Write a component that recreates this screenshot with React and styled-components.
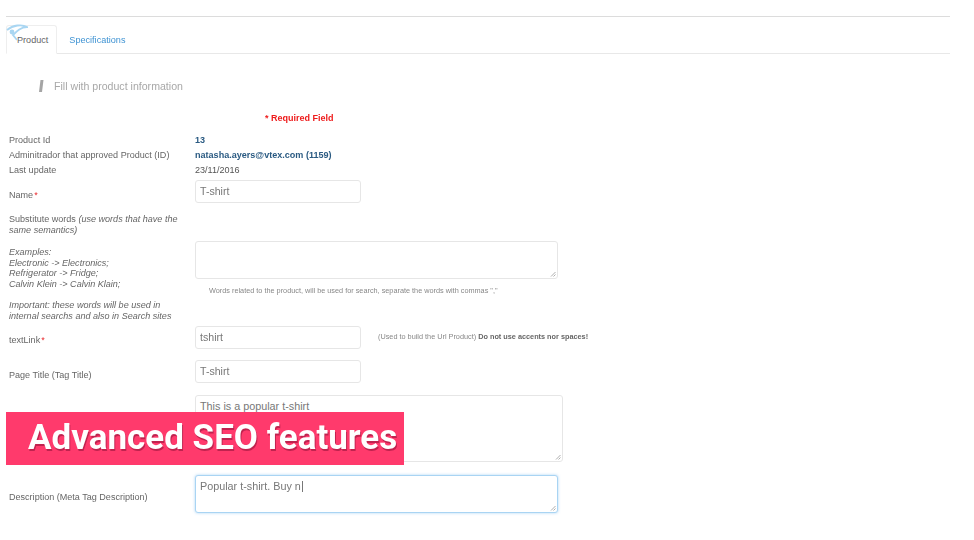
import React from 'react';
import styled, { createGlobalStyle } from 'styled-components';

const GlobalStyle = createGlobalStyle`
  html, body {
    margin: 0;
    padding: 0;
    background: #fff;
  }
`;

const Page = styled.div`
  position: relative;
  width: 974px;
  height: 540px;
  overflow: hidden;
  box-sizing: border-box;
  padding: 16px 24px 0 6px;
  font-family: 'Liberation Sans', Arial, sans-serif;
  color: #555;
`;
const Blurred = styled.div`
  filter: blur(0.6px);
`;
const TopRule = styled.div`
  height: 1px;
  background: #dcdcdc;
`;
const Tabs = styled.div`
  display: flex;
  height: 28px;
  margin-top: 8px;
  border-bottom: 1px solid #e8e8e8;
`;
const Tab = styled.div`
  position: relative;
  box-sizing: border-box;
  height: ${(p) => (p.$active ? 29 : 28)}px;
  display: flex;
  align-items: center;
  font-size: 9.1px;
  padding: ${(p) => (p.$active ? '0 8px 0 10px' : '0 11px')};
  color: ${(p) => (p.$active ? '#666' : '#3f93d3')};
  background: ${(p) => (p.$active ? '#fff' : 'transparent')};
  border: 1px solid ${(p) => (p.$active ? '#eeeeee' : 'transparent')};
  border-bottom: ${(p) => (p.$active ? '1px solid #fff' : 'none')};
  border-radius: 3px 3px 0 0;
`;
const Swoosh = styled.svg`
  position: absolute;
  left: -1px;
  top: -2px;
  width: 22px;
  height: 22px;
`;
const Heading = styled.div`
  display: flex;
  align-items: center;
  gap: 10px;
  margin: 25px 0 0 33px;
  height: 14px;
  font-size: 10.6px;
  color: #a8a8a8;
`;
const Required = styled.div`
  margin: 19px 0 0 259px;
  height: 12px;
  line-height: 12px;
  font-size: 9px;
  font-weight: bold;
  color: #ee1c1c;
`;
const Form = styled.div`
  margin: 9px 0 0 3px;
`;
const Row = styled.div`
  display: grid;
  grid-template-columns: 186px 1fr;
  align-items: ${(p) => (p.$top ? 'start' : 'center')};
  min-height: ${(p) => p.$h || 15}px;
  margin-top: ${(p) => p.$gap || 0}px;
  font-size: 9.05px;
  line-height: 10.5px;
`;
const Label = styled.div`
  color: #666;
  padding-top: ${(p) => p.$drop || 0}px;
`;
const Note = styled.div`
  width: 172px;
  color: #666;
  margin-bottom: ${(p) => p.$mb || 0}px;
`;
const Star = styled.span`
  color: #e8262a;
  margin-left: 1px;
`;
const Value = styled.div`
  color: ${(p) => (p.$link ? '#2a5a82' : '#555')};
  font-weight: ${(p) => (p.$link ? 'bold' : 'normal')};
`;
const FieldLine = styled.div`
  display: flex;
  align-items: center;
`;
const Input = styled.div`
  box-sizing: border-box;
  width: 166px;
  height: 23px;
  line-height: 20px;
  padding: 0 4px;
  font-size: 10.6px;
  color: #777;
  background: #fff;
  border: 1px solid #e6e6e6;
  border-radius: 3px;
`;
const Area = styled.div`
  position: relative;
  box-sizing: border-box;
  width: ${(p) => p.$w || 363}px;
  height: ${(p) => p.$h}px;
  margin-top: ${(p) => p.$mt || 0}px;
  padding: 4px;
  font-size: 10.8px;
  line-height: 12px;
  color: #777;
  background: #fff;
  border: 1px solid ${(p) => (p.$focus ? '#a9d4f3' : '#e6e6e6')};
  border-radius: 3px;
  box-shadow: ${(p) => (p.$focus ? '0 0 3px rgba(102, 175, 233, 0.55)' : 'none')};
`;
const Grip = styled.svg`
  position: absolute;
  right: 1px;
  bottom: 1px;
  width: 6px;
  height: 6px;
`;
const Caret = styled.span`
  display: inline-block;
  width: 1px;
  height: 11px;
  margin-left: 1px;
  vertical-align: -2px;
  background: #777;
`;
const Help = styled.div`
  margin: 7px 0 0 14px;
  font-size: 7.3px;
  line-height: 9px;
  color: #888;
`;
const Hint = styled.div`
  margin-left: 17px;
  font-size: 7.3px;
  color: #888;
  b {
    color: #666;
  }
`;
const Banner = styled.div`
  position: absolute;
  left: 6px;
  top: 412px;
  width: 398px;
  height: 53px;
  box-sizing: border-box;
  padding: 0 0 3px 22px;
  display: flex;
  align-items: center;
  background: #ff3a6c;
  color: #fff;
  font-family: Roboto, sans-serif;
  font-weight: 700;
  font-size: 35px;
  white-space: nowrap;
  text-shadow: 1px 2px 0 rgba(150, 20, 60, 0.6);
  filter: blur(0.4px);
`;

const ResizeGrip = () => (
  <Grip viewBox="0 0 6 6">
    <path d="M1 5.5 L5.5 1 M3.5 5.5 L5.5 3.5" stroke="#999" strokeWidth="0.8" />
  </Grip>
);

const App = () => (
  <Page>
    <GlobalStyle />
    <Blurred>
      <TopRule />
      <Tabs>
        <Tab $active>
          <Swoosh viewBox="0 0 22 22">
            <path d="M1 6 C7 1 16 0 21 3 C15 3 11 7 7 11 L11 16" fill="none" stroke="#a9d6f2" strokeWidth="1.8" />
            <circle cx="6" cy="8" r="2.4" fill="#a9d6f2" />
          </Swoosh>
          Product
        </Tab>
        <Tab>Specifications</Tab>
      </Tabs>
      <Heading>
        <svg width="5" height="12" viewBox="0 0 5 12">
          <path d="M1.5 0 H4.5 L3 12 H0 Z" fill="#a5a5a5" />
        </svg>
        Fill with product information
      </Heading>
      <Required>* Required Field</Required>
      <Form>
        <Row>
          <Label>Product Id</Label>
          <Value $link>13</Value>
        </Row>
        <Row>
          <Label>Adminitrador that approved Product (ID)</Label>
          <Value $link>natasha.ayers@vtex.com (1159)</Value>
        </Row>
        <Row>
          <Label>Last update</Label>
          <Value>23/11/2016</Value>
        </Row>
        <Row $h={23} $gap={2}>
          <Label $drop={7}>Name<Star>*</Star></Label>
          <Input>T-shirt</Input>
        </Row>
        <Row $top $gap={11}>
          <div>
            <Note $mb={12}>
              Substitute words <em>(use words that have the</em><br />
              <em>same semantics)</em>
            </Note>
            <Note $mb={11}>
              <em>Examples:</em><br />
              <em>Electronic -&gt; Electronics;</em><br />
              <em>Refrigerator -&gt; Fridge;</em><br />
              <em>Calvin Klein -&gt; Calvin Klain;</em>
            </Note>
            <Note>
              <em>Important: these words will be used in</em><br />
              <em>internal searchs and also in Search sites</em>
            </Note>
          </div>
          <div>
            <Area $h={38} $mt={27}><ResizeGrip /></Area>
            <Help>Words related to the product, will be used for search, separate the words with commas ","</Help>
          </div>
        </Row>
        <Row $h={23} $gap={5}>
          <Label $drop={6}>textLink<Star>*</Star></Label>
          <FieldLine>
            <Input>tshirt</Input>
            <Hint>(Used to build the Url Product) <b>Do not use accents nor spaces!</b></Hint>
          </FieldLine>
        </Row>
        <Row $h={23} $gap={11}>
          <Label $drop={7}>Page Title (Tag Title)</Label>
          <Input>T-shirt</Input>
        </Row>
        <Row $h={67} $gap={12}>
          <span />
          <Area $w={368} $h={67}>This is a popular t-shirt<ResizeGrip /></Area>
        </Row>
        <Row $h={38} $gap={13}>
          <Label $drop={7}>Description (Meta Tag Description)</Label>
          <Area $h={38} $focus>Popular t-shirt. Buy n<Caret /><ResizeGrip /></Area>
        </Row>
      </Form>
    </Blurred>
    <Banner>Advanced SEO features</Banner>
  </Page>
);

export default App;
